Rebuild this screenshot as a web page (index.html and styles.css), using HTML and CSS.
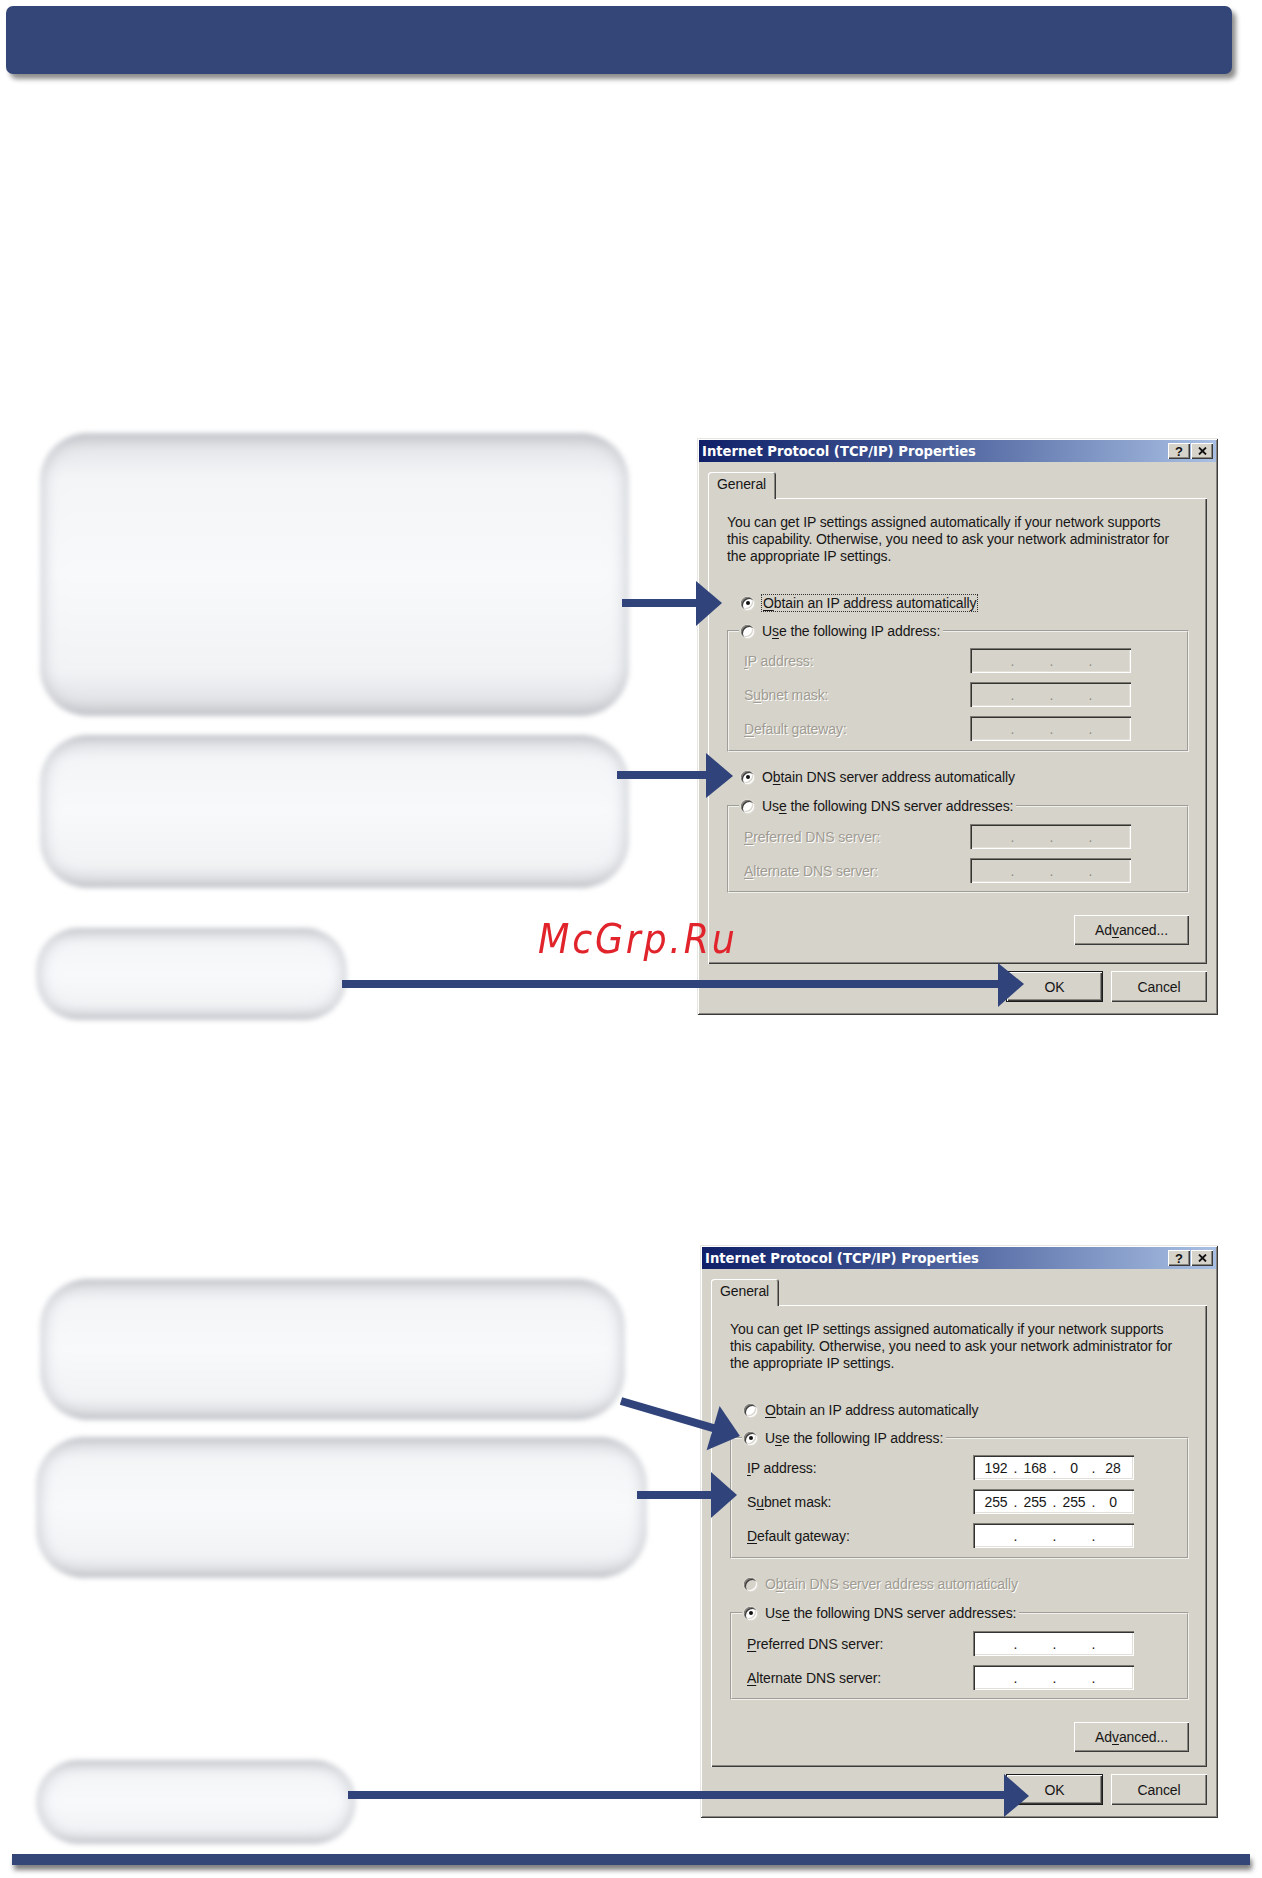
FILE: index.html
```html
<!DOCTYPE html>
<html lang="en">
<head>
<meta charset="utf-8">
<title>TCP/IP Properties</title>
<link rel="stylesheet" href="styles.css">
</head>
<body>
<div class="page">
  <div class="banner"></div>

  <section class="step step-auto">
    <div class="notes">
      <div class="note note-a"></div>
      <div class="note note-b"></div>
      <div class="note note-c pill"></div>
    </div>

    <div class="dialog">
      <div class="titlebar">
        <span class="title">Internet Protocol (TCP/IP) Properties</span>
        <span class="cap-btn help">?</span>
        <span class="cap-btn close"><svg width="9" height="8" viewBox="0 0 9 8"><path d="M1 0.5 L8 7.5 M8 0.5 L1 7.5" stroke="#111" stroke-width="1.8"/></svg></span>
      </div>
      <div class="tabs"><span class="tab">General</span></div>
      <div class="panel">
        <p class="intro">You can get IP settings assigned automatically if your network supports<br>this capability. Otherwise, you need to ask your network administrator for<br>the appropriate IP settings.</p>

        <div class="opt first"><span class="radio on"></span><span class="focus"><u>O</u>btain an IP address automatically</span></div>
        <fieldset class="group ip-group">
          <legend class="opt"><span class="radio"></span><span>U<u>s</u>e the following IP address:</span></legend>
          <div class="row off"><span class="lbl"><u>I</u>P address:</span><span class="ip"><span class="oct"></span><span class="dot">.</span><span class="oct"></span><span class="dot">.</span><span class="oct"></span><span class="dot">.</span><span class="oct"></span></span></div>
          <div class="row off"><span class="lbl">S<u>u</u>bnet mask:</span><span class="ip"><span class="oct"></span><span class="dot">.</span><span class="oct"></span><span class="dot">.</span><span class="oct"></span><span class="dot">.</span><span class="oct"></span></span></div>
          <div class="row off"><span class="lbl"><u>D</u>efault gateway:</span><span class="ip"><span class="oct"></span><span class="dot">.</span><span class="oct"></span><span class="dot">.</span><span class="oct"></span><span class="dot">.</span><span class="oct"></span></span></div>
        </fieldset>

        <div class="opt dns"><span class="radio on"></span><span>O<u>b</u>tain DNS server address automatically</span></div>
        <fieldset class="group dns-group">
          <legend class="opt"><span class="radio"></span><span>Us<u>e</u> the following DNS server addresses:</span></legend>
          <div class="row off"><span class="lbl"><u>P</u>referred DNS server:</span><span class="ip"><span class="oct"></span><span class="dot">.</span><span class="oct"></span><span class="dot">.</span><span class="oct"></span><span class="dot">.</span><span class="oct"></span></span></div>
          <div class="row off"><span class="lbl"><u>A</u>lternate DNS server:</span><span class="ip"><span class="oct"></span><span class="dot">.</span><span class="oct"></span><span class="dot">.</span><span class="oct"></span><span class="dot">.</span><span class="oct"></span></span></div>
        </fieldset>

        <span class="btn advanced">Ad<u>v</u>anced...</span>
      </div>
      <div class="actions">
        <span class="btn default">OK</span>
        <span class="btn">Cancel</span>
      </div>
    </div>
  </section>

  <section class="step step-manual">
    <div class="notes">
      <div class="note note-d"></div>
      <div class="note note-e"></div>
      <div class="note note-f pill"></div>
    </div>

    <div class="dialog">
      <div class="titlebar">
        <span class="title">Internet Protocol (TCP/IP) Properties</span>
        <span class="cap-btn help">?</span>
        <span class="cap-btn close"><svg width="9" height="8" viewBox="0 0 9 8"><path d="M1 0.5 L8 7.5 M8 0.5 L1 7.5" stroke="#111" stroke-width="1.8"/></svg></span>
      </div>
      <div class="tabs"><span class="tab">General</span></div>
      <div class="panel">
        <p class="intro">You can get IP settings assigned automatically if your network supports<br>this capability. Otherwise, you need to ask your network administrator for<br>the appropriate IP settings.</p>

        <div class="opt first"><span class="radio"></span><span><u>O</u>btain an IP address automatically</span></div>
        <fieldset class="group ip-group">
          <legend class="opt"><span class="radio on"></span><span>U<u>s</u>e the following IP address:</span></legend>
          <div class="row"><span class="lbl"><u>I</u>P address:</span><span class="ip"><span class="oct">192</span><span class="dot">.</span><span class="oct">168</span><span class="dot">.</span><span class="oct">0</span><span class="dot">.</span><span class="oct">28</span></span></div>
          <div class="row"><span class="lbl">S<u>u</u>bnet mask:</span><span class="ip"><span class="oct">255</span><span class="dot">.</span><span class="oct">255</span><span class="dot">.</span><span class="oct">255</span><span class="dot">.</span><span class="oct">0</span></span></div>
          <div class="row"><span class="lbl"><u>D</u>efault gateway:</span><span class="ip"><span class="oct"></span><span class="dot">.</span><span class="oct"></span><span class="dot">.</span><span class="oct"></span><span class="dot">.</span><span class="oct"></span></span></div>
        </fieldset>

        <div class="opt dns off"><span class="radio"></span><span>O<u>b</u>tain DNS server address automatically</span></div>
        <fieldset class="group dns-group">
          <legend class="opt"><span class="radio on"></span><span>Us<u>e</u> the following DNS server addresses:</span></legend>
          <div class="row"><span class="lbl"><u>P</u>referred DNS server:</span><span class="ip"><span class="oct"></span><span class="dot">.</span><span class="oct"></span><span class="dot">.</span><span class="oct"></span><span class="dot">.</span><span class="oct"></span></span></div>
          <div class="row"><span class="lbl"><u>A</u>lternate DNS server:</span><span class="ip"><span class="oct"></span><span class="dot">.</span><span class="oct"></span><span class="dot">.</span><span class="oct"></span><span class="dot">.</span><span class="oct"></span></span></div>
        </fieldset>

        <span class="btn advanced">Ad<u>v</u>anced...</span>
      </div>
      <div class="actions">
        <span class="btn default">OK</span>
        <span class="btn">Cancel</span>
      </div>
    </div>
  </section>

  <div class="rule"></div>

  <!-- pointer arrows laid over the notes and dialogs -->
  <svg class="arrows" width="1262" height="1878" viewBox="0 0 1262 1878">
    <g fill="#30437a">
      <rect x="622" y="599" width="76" height="8"/>
      <polygon points="696,581 722,603 696,626"/>

      <rect x="617" y="771" width="91" height="8"/>
      <polygon points="706,753 733,776 706,798"/>

      <rect x="342" y="980" width="658" height="8"/>
      <polygon points="998,963 1024,984 998,1007"/>

      <g transform="translate(621,1401) rotate(16.4)">
        <rect x="0" y="-4" width="98" height="8"/>
        <polygon points="96,-23 124,0 96,23"/>
      </g>

      <rect x="637" y="1491" width="76" height="8"/>
      <polygon points="711,1472 737,1495 711,1518"/>

      <rect x="348" y="1791" width="658" height="8"/>
      <polygon points="1004,1774 1029,1796 1004,1817"/>
    </g>
  </svg>

  <div class="mark">McGrp.Ru</div>
</div>
</body>
</html>
```

FILE: styles.css
```css
* {
  box-sizing: border-box;
}

body {
  margin: 0;
  background: #fff;
  font-family: "Liberation Sans", Arial, sans-serif;
}

.page {
  position: relative;
  width: 1262px;
  height: 1878px;
  overflow: hidden;
}

/* top title band */
.banner {
  margin: 6px 30px 0 6px;
  height: 68px;
  background: #334677;
  border-radius: 7px;
  box-shadow: 4px 5px 5px rgba(0, 0, 0, 0.45);
}

/* bottom rule */
.rule {
  margin: 10px 12px 0 12px;
  height: 11px;
  background: #334677;
  box-shadow: 2px 5px 5px rgba(0, 0, 0, 0.5);
}

.step {
  display: flex;
  align-items: flex-start;
}

.step-auto {
  margin-top: 359px;
}

.step-manual {
  margin-top: 225px;
}

/* soft callout panels on the left */
.notes {
  flex: 0 0 697px;
  display: flex;
  flex-direction: column;
  align-items: flex-start;
}

.step-manual .notes {
  padding-top: 34px;
}

.note {
  border-radius: 48px;
  background: linear-gradient(180deg, #d1d2d6 0%, #e7e8eb 6%, #f4f5f7 16%, #f8f9fb 50%, #f2f3f5 84%, #e4e5e8 94%, #cfd0d4 100%);
  box-shadow: inset 0 0 15px 3px rgba(172, 175, 184, 0.6);
  filter: blur(2.5px);
}

.note.pill {
  border-radius: 42px;
}

.note-a { margin-left: 40px; width: 589px; height: 283px; }
.note-b { margin: 19px 0 0 40px; width: 589px; height: 153px; }
.note-c { margin: 40px 0 0 36px; width: 311px; height: 92px; }
.note-d { margin-left: 40px; width: 585px; height: 141px; }
.note-e { margin: 17px 0 0 36px; width: 611px; height: 141px; }
.note-f { margin: 182px 0 0 36px; width: 320px; height: 84px; }

/* classic property-sheet dialog */
.dialog {
  width: 521px;
  height: 577px;
  margin-top: 5px;
  padding: 2px;
  display: flex;
  flex-direction: column;
  background: #d6d3ca;
  color: #161616;
  font-size: 14px;
  letter-spacing: -0.1px;
  box-shadow: inset 1px 1px 0 #e8e6e0, inset -1px -1px 0 #3a3a3a, inset 2px 2px 0 #fff, inset -2px -2px 0 #8a8780;
}

.step-manual .dialog {
  width: 518px;
  height: 573px;
  margin: 0 0 0 3px;
}

.titlebar {
  height: 22px;
  display: flex;
  align-items: center;
  padding: 0 3px 0 3px;
  background: linear-gradient(90deg, #0f2068 0%, #3d5291 38%, #a9c0e4 100%);
}

.title {
  flex: 1;
  color: #fff;
  font-family: "DejaVu Sans", Verdana, sans-serif;
  font-weight: bold;
  font-size: 13.2px;
  letter-spacing: 0;
}

.cap-btn {
  width: 22px;
  height: 16px;
  display: flex;
  align-items: center;
  justify-content: center;
  background: #d6d3ca;
  color: #111;
  font-weight: bold;
  font-size: 13px;
  box-shadow: inset 1px 1px 0 #fff, inset -1px -1px 0 #3a3a3a, inset -2px -2px 0 #8a8780;
}

.cap-btn + .cap-btn {
  margin-left: 1px;
}

.tabs {
  position: relative;
  z-index: 1;
  display: flex;
  height: 26px;
  margin: 10px 0 0 9px;
}

.tab {
  width: 68px;
  height: 27px;
  padding-left: 9px;
  line-height: 25px;
  background: #d6d3ca;
  border-radius: 3px 3px 0 0;
  box-shadow: inset 1px 1px 0 #fff, inset -1px 0 0 #3a3a3a, inset -2px 0 0 #8a8780;
}

.panel {
  flex: 1;
  display: flex;
  flex-direction: column;
  margin: 0 9px;
  padding: 16px 18px 0 19px;
  box-shadow: inset 1px 1px 0 #fff, inset -1px -1px 0 #3a3a3a, inset -2px -2px 0 #8a8780;
}

.intro {
  margin: 0;
  line-height: 17px;
  white-space: nowrap;
}

.opt {
  display: flex;
  align-items: center;
  height: 22px;
  white-space: nowrap;
}

.opt.first {
  margin-top: 27px;
}

.opt.dns {
  margin-top: 14px;
}

.radio {
  position: relative;
  flex: none;
  width: 13px;
  height: 13px;
  margin: 0 8px 0 14px;
  border-radius: 50%;
  background: #fff;
  box-shadow: inset 1px 1px 0 #8a8780, inset 2px 2px 0 #3a3a3a, inset -1px -1px 0 #fff, inset -2px -2px 0 #d6d3ca, 0 0 2px rgba(255, 255, 255, 0.9);
}

.radio.on::after {
  content: "";
  position: absolute;
  left: 4.5px;
  top: 4.5px;
  width: 4px;
  height: 4px;
  border-radius: 50%;
  background: #111;
}

.off .radio {
  background: #d6d3ca;
}

.focus {
  outline: 1px dotted #333;
  padding: 0 1px;
}

u {
  text-decoration: underline;
  text-underline-offset: 2px;
  text-decoration-thickness: 1px;
}

.off {
  color: #9f9b92;
  text-shadow: 1px 1px 0 #fff;
}

.group {
  margin: 6px 0 0;
  padding: 6px 0 9px 15px;
  border: 2px groove #f2f0eb;
}

.dns-group {
  margin-top: 7px;
  padding-top: 7px;
  padding-bottom: 8px;
}

.group > legend {
  margin-left: -5px;
  padding: 0 3px 0 2px;
}

.group > legend .radio {
  margin-left: 0;
}

.row {
  display: flex;
  align-items: center;
  height: 25px;
}

.row + .row {
  margin-top: 9px;
}

.lbl {
  width: 226px;
  flex: none;
  white-space: nowrap;
}

/* four-octet address box */
.ip {
  width: 161px;
  height: 25px;
  display: flex;
  align-items: center;
  padding: 1px 4px 0 6px;
  background: #fff;
  color: #161616;
  text-shadow: none;
  box-shadow: inset 1px 1px 0 #7d7a72, inset 2px 2px 0 #333, inset -1px -1px 0 #fff, inset -2px -2px 0 #e2dfd8;
}

.off .ip {
  background: #d6d3ca;
  color: #8f8b82;
}

.oct {
  width: 34px;
  text-align: center;
}

.dot {
  width: 5px;
  text-align: center;
}

.btn {
  display: flex;
  align-items: center;
  justify-content: center;
  height: 31px;
  background: #d6d3ca;
  box-shadow: inset 1px 1px 0 #fff, inset -1px -1px 0 #3a3a3a, inset -2px -2px 0 #8a8780;
}

.advanced {
  align-self: flex-end;
  width: 115px;
  height: 30px;
  margin-top: 22px;
}

.actions {
  display: flex;
  justify-content: flex-end;
  gap: 8px;
  margin: 7px 9px 11px 0;
}

.actions .btn {
  width: 96px;
}

.btn.default {
  width: 97px;
  box-shadow: inset 0 0 0 1px #1c1c1c, inset 2px 2px 0 #fff, inset -2px -2px 0 #3a3a3a, inset -3px -3px 0 #8a8780;
}

.arrows {
  position: absolute;
  left: 0;
  top: 0;
  pointer-events: none;
}

.mark {
  position: absolute;
  left: 538px;
  top: 916px;
  color: #e1242c;
  font-family: "DejaVu Sans", sans-serif;
  font-style: oblique;
  font-size: 40px;
  letter-spacing: 3px;
  transform: scaleX(0.91);
  transform-origin: left top;
}
```
